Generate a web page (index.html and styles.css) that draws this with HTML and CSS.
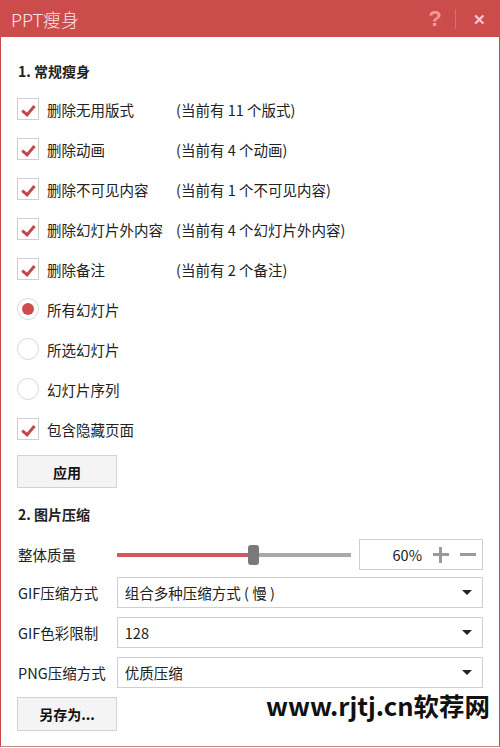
FILE: index.html
```html
<!DOCTYPE html>
<html lang="zh-CN">
<head>
  <meta charset="UTF-8">
  <title>PPT瘦身</title>
  <link rel="stylesheet" href="styles.css">
</head>
<body>
  <div class="window">
    <div class="titlebar">
      <span class="title">PPT瘦身</span>
      <span class="tb-help">?</span>
      <span class="tb-sep"></span>
      <span class="tb-close">&#x2715;</span>
    </div>

    <div class="content">
      <h2 class="section">1. 常规瘦身</h2>
      <div class="options">
        <div class="row"><span class="check on"></span><span class="label">删除无用版式</span><span class="note">(当前有 11 个版式)</span></div>
        <div class="row"><span class="check on"></span><span class="label">删除动画</span><span class="note">(当前有 4 个动画)</span></div>
        <div class="row"><span class="check on"></span><span class="label">删除不可见内容</span><span class="note">(当前有 1 个不可见内容)</span></div>
        <div class="row"><span class="check on"></span><span class="label">删除幻灯片外内容</span><span class="note">(当前有 4 个幻灯片外内容)</span></div>
        <div class="row"><span class="check on"></span><span class="label">删除备注</span><span class="note">(当前有 2 个备注)</span></div>
        <div class="row"><span class="radio on"></span><span class="label">所有幻灯片</span></div>
        <div class="row"><span class="radio"></span><span class="label">所选幻灯片</span></div>
        <div class="row"><span class="radio"></span><span class="label">幻灯片序列</span></div>
        <div class="row"><span class="check on"></span><span class="label">包含隐藏页面</span></div>
      </div>
      <button class="btn btn-apply">应用</button>

      <h2 class="section section-2">2. 图片压缩</h2>
      <div class="form">
        <div class="frow frow-quality">
          <span class="flabel">整体质量</span>
          <div class="slider">
            <div class="track"><div class="fill" style="width: 57%"></div></div>
            <div class="thumb" style="left: 57%"></div>
          </div>
          <div class="spin">
            <span class="spin-val">60%</span>
            <span class="spin-plus"></span>
            <span class="spin-minus"></span>
          </div>
        </div>
        <div class="frow">
          <span class="flabel">GIF压缩方式</span>
          <div class="select"><span>组合多种压缩方式 ( 慢 )</span><span class="arrow"></span></div>
        </div>
        <div class="frow">
          <span class="flabel">GIF色彩限制</span>
          <div class="select"><span>128</span><span class="arrow"></span></div>
        </div>
        <div class="frow">
          <span class="flabel">PNG压缩方式</span>
          <div class="select"><span>优质压缩</span><span class="arrow"></span></div>
        </div>
        <div class="frow">
          <button class="btn btn-save">另存为...</button>
        </div>
      </div>
    </div>

    <div class="watermark">www.rjtj.cn软荐网</div>
  </div>
</body>
</html>
```

FILE: styles.css
```css
:root {
  --red: #cc4b4b;
  --check: #c4474f;
  --text: #222;
  --line: #cfcfcf;
}

* {
  box-sizing: border-box;
}

body {
  margin: 0;
  font-family: "Noto Sans CJK SC", "Noto Sans", sans-serif;
  color: var(--text);
  background: #fff;
}

.window {
  position: relative;
  width: 500px;
  height: 747px;
  border: 1px solid #c9494a;
  border-top: none;
  border-bottom-color: #c98a8a;
  background: #fff;
}

.titlebar {
  height: 37px;
  margin: 0 -1px;
  background: var(--red);
  display: flex;
  align-items: center;
  padding: 0 12px 0 11px;
}

.title {
  flex: 1;
  font-size: 18px;
  color: #fbe6e6;
  font-weight: 300;
}

.tb-help {
  font-family: "Liberation Sans", sans-serif;
  font-weight: bold;
  font-size: 22px;
  color: #ef9a9a;
  width: 20px;
  text-align: center;
}

.tb-sep {
  width: 1px;
  height: 20px;
  background: #d86e6e;
  margin: 0 14px 0 10px;
}

.tb-close {
  font-size: 15px;
  font-weight: bold;
  color: #f6caca;
  width: 18px;
  text-align: center;
}

.content {
  padding: 0 16px;
}

.section {
  margin: 19px 0 0;
  height: 30px;
  line-height: 30px;
  font-size: 14px;
  font-weight: bold;
  padding-left: 1px;
}

.section-2 {
  margin-top: 11px;
}

.options {
  margin-top: 3px;
}

.row {
  height: 40px;
  display: flex;
  align-items: center;
  font-size: 14.5px;
}

.check,
.radio {
  width: 22px;
  height: 22px;
  border: 1px solid var(--line);
  margin-right: 8px;
  flex: none;
  position: relative;
  background: #fff;
}

.radio {
  border-radius: 50%;
  border-color: #d8d8d8;
}

.check.on::after {
  content: "";
  position: absolute;
  left: 5px;
  top: 7px;
  width: 10px;
  height: 5px;
  border-left: 3px solid var(--check);
  border-bottom: 3px solid var(--check);
  transform: rotate(-50deg);
  transform-origin: 40% 60%;
}

.radio.on::after {
  content: "";
  position: absolute;
  left: 4px;
  top: 4px;
  width: 12px;
  height: 12px;
  border-radius: 50%;
  background: #d14a4a;
}

.label {
  width: 129px;
  white-space: nowrap;
}

.btn {
  display: block;
  width: 100px;
  height: 33px;
  margin-top: 6px;
  border: 1px solid #d2d2d2;
  background: #f4f4f4;
  font-family: inherit;
  font-size: 14px;
  font-weight: bold;
  color: #111;
}

.form {
  margin-top: 8px;
  display: flex;
  flex-direction: column;
  gap: 9px;
}

.frow {
  height: 31px;
  display: flex;
  align-items: center;
  font-size: 14.5px;
}

.frow-quality {
  margin-top: 2px;
  margin-bottom: -2px;
}

.flabel {
  width: 100px;
  padding-left: 1px;
  white-space: nowrap;
}

.slider {
  position: relative;
  width: 235px;
  height: 31px;
  display: flex;
  align-items: center;
}

.track {
  width: 100%;
  height: 4px;
  background: #a9a9a9;
}

.fill {
  height: 100%;
  background: #d35a5a;
}

.thumb {
  position: absolute;
  top: 6px;
  width: 11px;
  height: 20px;
  margin-left: -2px;
  border-radius: 3px;
  background: #7a7a7a;
}

.spin {
  margin-left: 8px;
  width: 124px;
  height: 31px;
  border: 1px solid var(--line);
  display: flex;
  align-items: center;
  justify-content: flex-end;
  padding-right: 6px;
}

.spin-val {
  margin-right: 0;
}

.spin-plus,
.spin-minus {
  position: relative;
  width: 16px;
  height: 16px;
  margin-left: 11px;
}

.spin-plus::before,
.spin-plus::after,
.spin-minus::before {
  content: "";
  position: absolute;
  background: #9a9a9a;
  left: 0;
  top: 6px;
  width: 16px;
  height: 3px;
}

.spin-plus::after {
  left: 6px;
  top: 0;
  width: 3px;
  height: 16px;
}

.select {
  width: 367px;
  height: 31px;
  border: 1px solid var(--line);
  display: flex;
  align-items: center;
  justify-content: space-between;
  padding: 0 10px 0 7px;
}

.arrow {
  width: 0;
  height: 0;
  border-left: 5px solid transparent;
  border-right: 5px solid transparent;
  border-top: 5px solid #222;
}

.btn-save {
  height: 34px;
  margin-top: 0;
  align-self: flex-start;
}

.watermark {
  position: absolute;
  right: 9px;
  top: 688px;
  font-size: 25.5px;
  font-weight: bold;
  color: #111;
  white-space: nowrap;
  line-height: 34px;
}
```
